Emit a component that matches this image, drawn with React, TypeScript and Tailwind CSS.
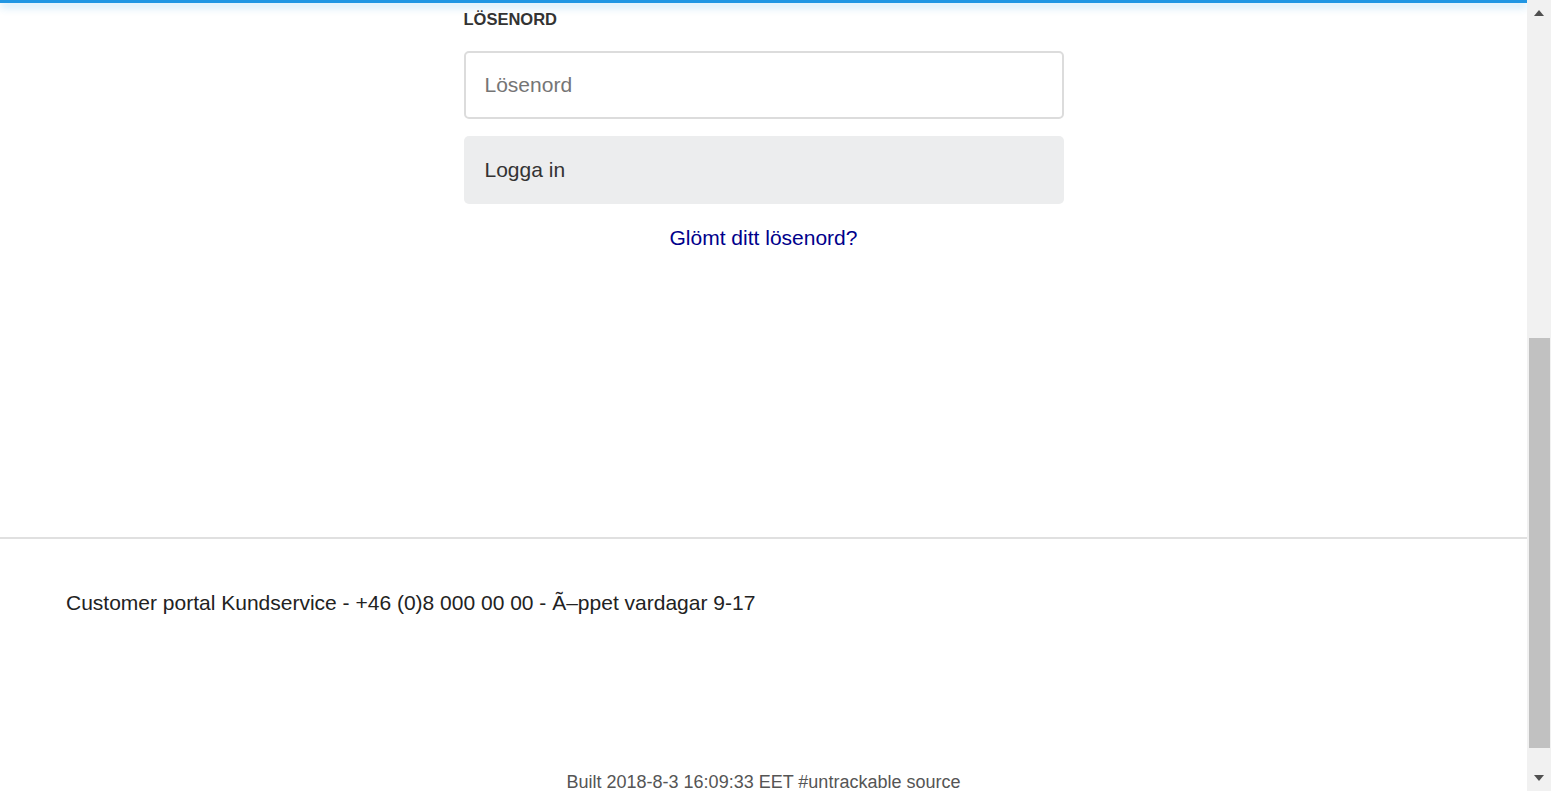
export default function App() {
  return (
    <div className="flex h-[791px] w-[1551px] overflow-hidden bg-white font-['Liberation_Sans',Arial,sans-serif]">
      {/* Page */}
      <div className="flex w-[1527px] flex-col overflow-hidden [&>*]:shrink-0">
        <div className="h-[3px] bg-[#2196e3] shadow-[0_3px_9px_rgba(33,150,227,0.45)]" />

        <div className="mx-auto w-[600px]">
          <div className="pt-[7px] text-[16.5px] font-bold leading-[18px] text-[#333]">LÖSENORD</div>
          <input
            type="password"
            placeholder="Lösenord"
            className="mt-[23px] block h-[68px] w-full rounded-[5px] border-2 border-[#dcdcdc] px-[19px] text-[21px] text-[#333] outline-none placeholder:text-[#757575]"
          />
          <button className="mt-[17px] flex h-[68px] w-full items-center rounded-[5px] bg-[#ecedee] px-[21px] text-left text-[21px] text-[#333]">
            Logga in
          </button>
          <div className="mt-[22px] text-center text-[21px] leading-[24px]">
            <a href="#" className="text-[#00008b]">Glömt ditt lösenord?</a>
          </div>
        </div>

        <div className="mt-[287px] h-[2px] bg-[#e0e0e0]" />

        <div className="pl-[66px] pt-[52px] text-[21px] leading-[24px] text-[#222]">
          Customer portal Kundservice - +46 (0)8 000 00 00 - Ã–ppet vardagar 9-17
        </div>

        <div className="mt-[157px] text-center text-[18px] leading-[20px] text-[#555]">
          Built 2018-8-3 16:09:33 EET #untrackable source
        </div>
      </div>

      {/* Scrollbar */}
      <div className="flex w-[24px] flex-col items-center bg-[#f1f1f1]">
        <div className="flex h-[26px] items-center justify-center">
          <svg width="12" height="8" viewBox="0 0 12 8"><path d="M6 1 L11 7 H1 Z" fill="#505050" /></svg>
        </div>
        <div className="mt-[312px] h-[410px] w-[21px] bg-[#c1c1c1]" />
        <div className="flex-1" />
        <div className="flex h-[26px] items-center justify-center">
          <svg width="12" height="8" viewBox="0 0 12 8"><path d="M6 7 L11 1 H1 Z" fill="#505050" /></svg>
        </div>
      </div>
    </div>
  );
}
